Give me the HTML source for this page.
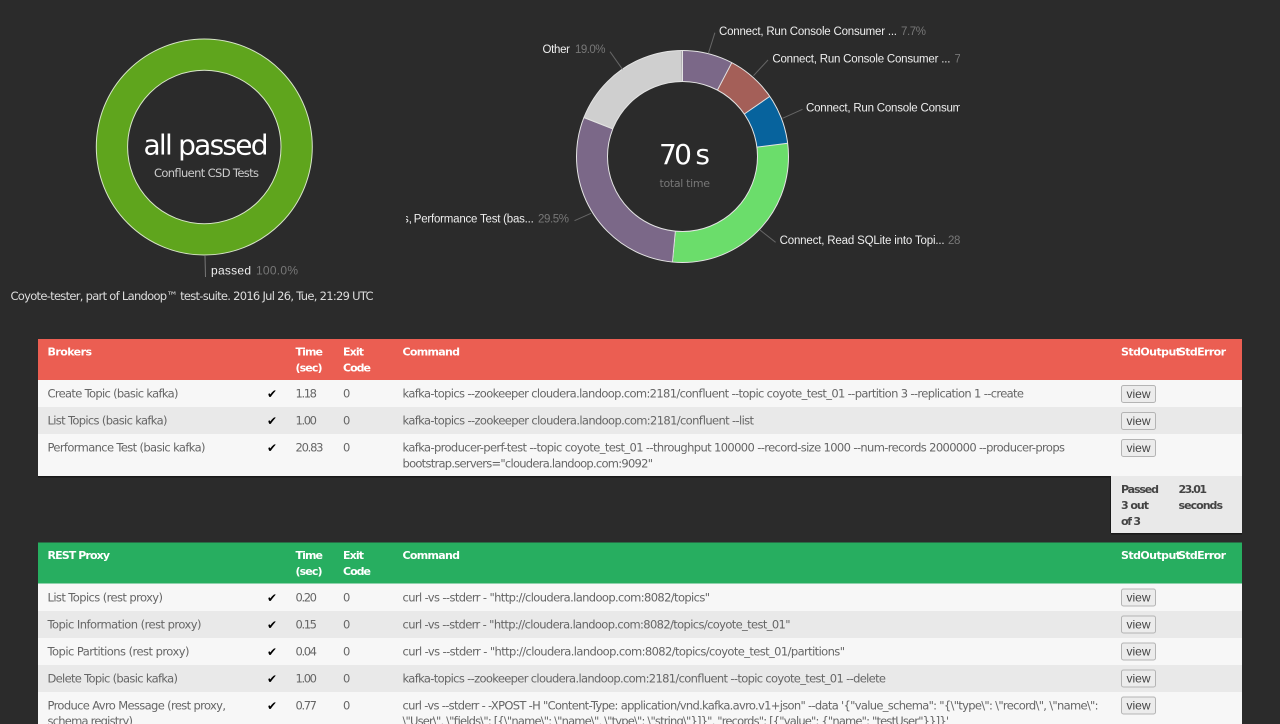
<!DOCTYPE html>
<html><head><meta charset="utf-8"><title>Coyote-tester</title>
<style>
html,body{margin:0;padding:0;background:#2b2b2b;width:1280px;height:724px;overflow:hidden}
svg{display:block;position:absolute;left:0;top:0}
text{font-family:"Liberation Sans",sans-serif;white-space:pre}
.d{font-family:"DejaVu Sans","Liberation Sans",sans-serif}
.r{font-size:11.5px;fill:#666;font-family:"DejaVu Sans","Liberation Sans",sans-serif}
.h{font-size:11px;font-weight:bold;fill:#fff;font-family:"DejaVu Sans","Liberation Sans",sans-serif}
.b{font-size:11px;font-weight:bold;fill:#444;font-family:"DejaVu Sans","Liberation Sans",sans-serif}
.l{font-size:11.5px;fill:#eee}
.p{font-size:11.5px;fill:#777}
.c{font-size:12px;fill:#000;font-family:"DejaVu Sans",sans-serif}
.v{font-size:12px;fill:#444;text-anchor:middle}
.btn{fill:#ececec;stroke:#b4b4b4;stroke-width:1}
.ln{stroke:#666;stroke-width:1;fill:none}
</style></head><body>
<svg width="1280" height="724" viewBox="0 0 1280 724" xmlns="http://www.w3.org/2000/svg">
<defs>
<clipPath id="cl"><rect x="406" y="0" width="554" height="300"/></clipPath>
</defs>

<!-- left donut -->
<circle cx="204.3" cy="147" r="92.3" fill="none" stroke="#5fa51d" stroke-width="31"/>
<circle cx="204.3" cy="147" r="108" fill="none" stroke="#d8e6c8" stroke-width="1"/>
<circle cx="204.3" cy="147" r="76.7" fill="none" stroke="#d8e6c8" stroke-width="1"/>
<text class="d" x="143.5" y="154.5" font-size="28" fill="#fff" textLength="125" lengthAdjust="spacing">all passed</text>
<text class="d" x="154" y="177" font-size="11.5" fill="#ccc" textLength="105" lengthAdjust="spacing">Confluent CSD Tests</text>
<line x1="205" y1="256" x2="205.5" y2="277" stroke="#777"/>
<text class="l" x="211" y="274.5" textLength="40" font-weight="bold" style="font-weight:normal;font-size:12px">passed</text>
<text class="p" x="256" y="274.5" textLength="42" style="font-size:12px">100.0%</text>
<text class="d" x="10.5" y="300" font-size="11.5" fill="#ddd" textLength="363" lengthAdjust="spacing">Coyote-tester, part of Landoop™ test-suite. 2016 Jul 26, Tue, 21:29 UTC</text>

<!-- right donut -->
<g fill="none" stroke-width="31">
<circle cx="682.5" cy="156.5" r="90.5" pathLength="100" stroke="#7b6888" stroke-dasharray="7.7 92.3" transform="rotate(-90 682.5 156.5)"/>
<circle cx="682.5" cy="156.5" r="90.5" pathLength="100" stroke="#a45f58" stroke-dasharray="7.7 92.3" stroke-dashoffset="-7.7" transform="rotate(-90 682.5 156.5)"/>
<circle cx="682.5" cy="156.5" r="90.5" pathLength="100" stroke="#07639d" stroke-dasharray="7.6 92.4" stroke-dashoffset="-15.4" transform="rotate(-90 682.5 156.5)"/>
<circle cx="682.5" cy="156.5" r="90.5" pathLength="100" stroke="#6bdd6b" stroke-dasharray="28.5 71.5" stroke-dashoffset="-23" transform="rotate(-90 682.5 156.5)"/>
<circle cx="682.5" cy="156.5" r="90.5" pathLength="100" stroke="#7b6888" stroke-dasharray="29.5 70.5" stroke-dashoffset="-51.5" transform="rotate(-90 682.5 156.5)"/>
<circle cx="682.5" cy="156.5" r="90.5" pathLength="100" stroke="#cfcfcf" stroke-dasharray="19 81" stroke-dashoffset="-81" transform="rotate(-90 682.5 156.5)"/>
</g>
<g stroke="#e4e4e4" stroke-width="1" fill="none">
<circle cx="682.5" cy="156.5" r="106"/>
<circle cx="682.5" cy="156.5" r="75"/>
<line x1="682.5" y1="81.5" x2="682.5" y2="50.5"/>
<line x1="717.4" y1="90.1" x2="731.8" y2="62.7"/>
<line x1="744.3" y1="114" x2="769.8" y2="96.4"/>
<line x1="756.9" y1="147.1" x2="787.7" y2="143.2"/>
<line x1="675.4" y1="231.2" x2="672.5" y2="262"/>
<line x1="612.8" y1="128.9" x2="583.9" y2="117.5"/>
</g>
<text class="d" x="659" y="164" font-size="28" fill="#fff" textLength="51" lengthAdjust="spacing">70 s</text>
<text class="d" x="659.5" y="187" font-size="11" fill="#777" textLength="50.5" lengthAdjust="spacing">total time</text>

<line class="ln" x1="714.9" y1="32.7" x2="708.4" y2="53.3"/>
<line class="ln" x1="768" y1="60" x2="753.5" y2="75.7"/>
<line class="ln" x1="802.5" y1="109.3" x2="782.5" y2="118.3"/>
<line class="ln" x1="775.6" y1="242.3" x2="760" y2="230"/>
<line class="ln" x1="574.5" y1="220.7" x2="591" y2="213.3"/>
<line class="ln" x1="610" y1="51.7" x2="622.5" y2="69.3"/>

<g clip-path="url(#cl)">
<text class="l" x="719" y="35" textLength="178">Connect, Run Console Consumer ...</text>
<text class="p" x="901" y="35" textLength="25">7.7%</text>
<text class="l" x="772.4" y="62.5" textLength="178">Connect, Run Console Consumer ...</text>
<text class="p" x="954.5" y="62.5" textLength="25">7.7%</text>
<text class="l" x="806" y="111.5" textLength="178">Connect, Run Console Consumer ...</text>
<text class="l" x="779.6" y="244" textLength="165">Connect, Read SQLite into Topi...</text>
<text class="p" x="948" y="244" textLength="31">28.5%</text>
<text class="l" x="412" y="222.5" text-anchor="end">Brokers,</text>
<text class="l" x="413.8" y="222.5" textLength="120">Performance Test (bas...</text>
<text class="p" x="538" y="222.5" textLength="31">29.5%</text>
<text class="l" x="542.5" y="53" textLength="27.5">Other</text>
<text class="p" x="575" y="53" textLength="30.5">19.0%</text>
</g>

<!-- Brokers table -->
<rect x="38" y="476" width="1073" height="1.5" fill="#1a1a1a"/>
<rect x="1111" y="533" width="131" height="1.5" fill="#1a1a1a"/>
<rect x="38" y="339" width="1204" height="41" fill="#eb5e52"/>
<rect x="38" y="380" width="1204" height="27" fill="#f7f7f7"/>
<rect x="38" y="407" width="1204" height="27" fill="#e9e9e9"/>
<rect x="38" y="434" width="1204" height="42" fill="#f7f7f7"/>
<rect x="1111" y="476" width="131" height="57" fill="#e9e9e9"/>
<rect x="1110" y="476" width="1" height="57" fill="#1a1a1a"/>

<text class="h" x="47.5" y="355.5" textLength="44.5">Brokers</text>
<text class="h" x="295.5" y="355.5" textLength="27.5">Time</text>
<text class="h" x="295.5" y="371.5" textLength="27">(sec)</text>
<text class="h" x="343" y="355.5" textLength="21">Exit</text>
<text class="h" x="343" y="371.5" textLength="28">Code</text>
<text class="h" x="402.5" y="355.5" textLength="57.5">Command</text>
<text class="h" x="1121" y="355.5" textLength="60">StdOutput</text>
<text class="h" x="1178" y="355.5" textLength="48">StdError</text>

<text class="r" x="47.5" y="397.5" textLength="131">Create Topic (basic kafka)</text>
<text class="c" x="267" y="398">✔</text>
<text class="r" x="295.5" y="397.5" textLength="21.5">1.18</text>
<text class="r" x="343" y="397.5">0</text>
<text class="r" x="402.5" y="397.5" textLength="621.5">kafka-topics --zookeeper cloudera.landoop.com:2181/confluent --topic coyote_test_01 --partition 3 --replication 1 --create</text>
<rect class="btn" x="1121.5" y="385.5" width="34" height="17" rx="2"/><text class="v" x="1138.5" y="398">view</text>

<text class="r" x="47.5" y="424.5" textLength="120">List Topics (basic kafka)</text>
<text class="c" x="267" y="425">✔</text>
<text class="r" x="295.5" y="424.5" textLength="21.5">1.00</text>
<text class="r" x="343" y="424.5">0</text>
<text class="r" x="402.5" y="424.5" textLength="351.5">kafka-topics --zookeeper cloudera.landoop.com:2181/confluent --list</text>
<rect class="btn" x="1121.5" y="412.5" width="34" height="17" rx="2"/><text class="v" x="1138.5" y="425">view</text>

<text class="r" x="47.5" y="451.5" textLength="158">Performance Test (basic kafka)</text>
<text class="c" x="267" y="452">✔</text>
<text class="r" x="295.5" y="451.5" textLength="28">20.83</text>
<text class="r" x="343" y="451.5">0</text>
<text class="r" x="402.5" y="451.5" textLength="662.5">kafka-producer-perf-test --topic coyote_test_01 --throughput 100000 --record-size 1000 --num-records 2000000 --producer-props</text>
<text class="r" x="402.5" y="467.5" textLength="250.5">bootstrap.servers="cloudera.landoop.com:9092"</text>
<rect class="btn" x="1121.5" y="439.5" width="34" height="17" rx="2"/><text class="v" x="1138.5" y="452">view</text>

<text class="b" x="1121" y="493" textLength="38">Passed</text>
<text class="b" x="1121" y="509" textLength="28">3 out</text>
<text class="b" x="1121" y="525" textLength="20">of 3</text>
<text class="b" x="1178.5" y="493" textLength="28.5">23.01</text>
<text class="b" x="1178.5" y="509" textLength="44.5">seconds</text>

<!-- REST table -->
<rect x="38" y="542.5" width="1204" height="41" fill="#27ae60"/>
<rect x="38" y="583.5" width="1204" height="27.5" fill="#f7f7f7"/>
<rect x="38" y="611" width="1204" height="27" fill="#e9e9e9"/>
<rect x="38" y="638" width="1204" height="27" fill="#f7f7f7"/>
<rect x="38" y="665" width="1204" height="27" fill="#e9e9e9"/>
<rect x="38" y="692" width="1204" height="32" fill="#f7f7f7"/>

<text class="h" x="47.5" y="559" textLength="62.5">REST Proxy</text>
<text class="h" x="295.5" y="559" textLength="27.5">Time</text>
<text class="h" x="295.5" y="575" textLength="27">(sec)</text>
<text class="h" x="343" y="559" textLength="21">Exit</text>
<text class="h" x="343" y="575" textLength="28">Code</text>
<text class="h" x="402.5" y="559" textLength="57.5">Command</text>
<text class="h" x="1121" y="559" textLength="60">StdOutput</text>
<text class="h" x="1178" y="559" textLength="48">StdError</text>

<text class="r" x="47.5" y="601.5" textLength="115.5">List Topics (rest proxy)</text>
<text class="c" x="267" y="602">✔</text>
<text class="r" x="295.5" y="601.5" textLength="21.5">0.20</text>
<text class="r" x="343" y="601.5">0</text>
<text class="r" x="402.5" y="601.5" textLength="307.5">curl -vs --stderr - "http://cloudera.landoop.com:8082/topics"</text>
<rect class="btn" x="1121.5" y="589" width="34" height="17" rx="2"/><text class="v" x="1138.5" y="601.5">view</text>

<text class="r" x="47.5" y="628.5" textLength="154">Topic Information (rest proxy)</text>
<text class="c" x="267" y="629">✔</text>
<text class="r" x="295.5" y="628.5" textLength="21.5">0.15</text>
<text class="r" x="343" y="628.5">0</text>
<text class="r" x="402.5" y="628.5" textLength="388">curl -vs --stderr - "http://cloudera.landoop.com:8082/topics/coyote_test_01"</text>
<rect class="btn" x="1121.5" y="616" width="34" height="17" rx="2"/><text class="v" x="1138.5" y="628.5">view</text>

<text class="r" x="47.5" y="655.5" textLength="142">Topic Partitions (rest proxy)</text>
<text class="c" x="267" y="656">✔</text>
<text class="r" x="295.5" y="655.5" textLength="21.5">0.04</text>
<text class="r" x="343" y="655.5">0</text>
<text class="r" x="402.5" y="655.5" textLength="442.5">curl -vs --stderr - "http://cloudera.landoop.com:8082/topics/coyote_test_01/partitions"</text>
<rect class="btn" x="1121.5" y="643" width="34" height="17" rx="2"/><text class="v" x="1138.5" y="655.5">view</text>

<text class="r" x="47.5" y="682.5" textLength="130.5">Delete Topic (basic kafka)</text>
<text class="c" x="267" y="683">✔</text>
<text class="r" x="295.5" y="682.5" textLength="21.5">1.00</text>
<text class="r" x="343" y="682.5">0</text>
<text class="r" x="402.5" y="682.5" textLength="483.5">kafka-topics --zookeeper cloudera.landoop.com:2181/confluent --topic coyote_test_01 --delete</text>
<rect class="btn" x="1121.5" y="670" width="34" height="17" rx="2"/><text class="v" x="1138.5" y="682.5">view</text>

<text class="r" x="47.5" y="709.5" textLength="178.5">Produce Avro Message (rest proxy,</text>
<text class="r" x="47.5" y="725" textLength="85.5">schema registry)</text>
<text class="c" x="267" y="710">✔</text>
<text class="r" x="295.5" y="709.5" textLength="21.5">0.77</text>
<text class="r" x="343" y="709.5">0</text>
<text class="r" x="402.5" y="709.5" textLength="696">curl -vs --stderr - -XPOST -H "Content-Type: application/vnd.kafka.avro.v1+json" --data '{"value_schema": "{\"type\": \"record\", \"name\":</text>
<text class="r" x="402.5" y="725" textLength="546.5">\"User\", \"fields\": [{\"name\": \"name\", \"type\": \"string\"}]}", "records": [{"value": {"name": "testUser"}}]}'</text>
<rect class="btn" x="1121.5" y="697" width="34" height="17" rx="2"/><text class="v" x="1138.5" y="709.5">view</text>
</svg>
</body></html>
